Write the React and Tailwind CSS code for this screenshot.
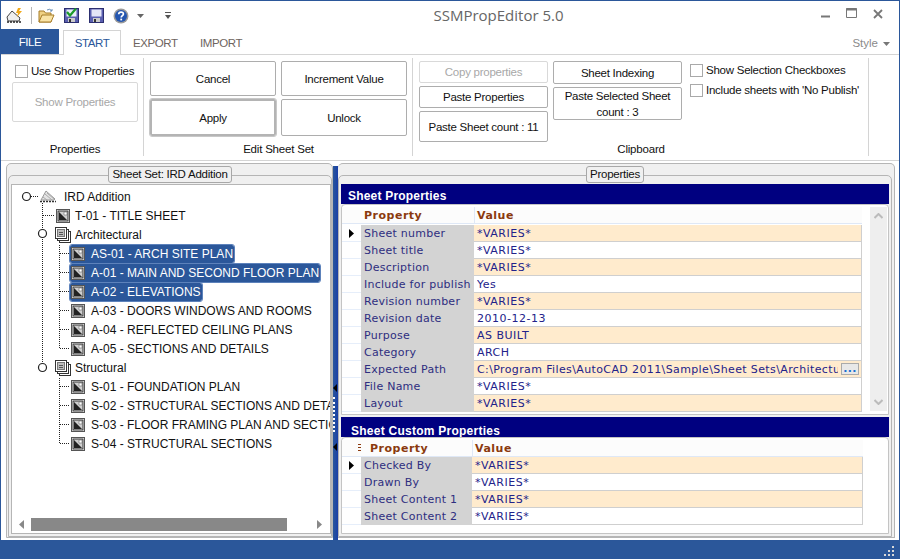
import React from 'react';

const sheetProps = [
  ['Sheet number', '*VARIES*'],
  ['Sheet title', '*VARIES*'],
  ['Description', '*VARIES*'],
  ['Include for publish', 'Yes'],
  ['Revision number', '*VARIES*'],
  ['Revision date', '2010-12-13'],
  ['Purpose', 'AS BUILT'],
  ['Category', 'ARCH'],
  ['Expected Path', 'C:\\Program Files\\AutoCAD 2011\\Sample\\Sheet Sets\\Architectural', true],
  ['File Name', '*VARIES*'],
  ['Layout', '*VARIES*'],
];

const customProps = [
  ['Checked By', '*VARIES*'],
  ['Drawn By', '*VARIES*'],
  ['Sheet Content 1', '*VARIES*'],
  ['Sheet Content 2', '*VARIES*'],
];

const tree = [
  { label: 'IRD Addition', kind: 'root' },
  { label: 'T-01 - TITLE SHEET', kind: 'top' },
  { label: 'Architectural', kind: 'group' },
  { label: 'AS-01 - ARCH SITE PLAN', kind: 'sheet', selected: true },
  { label: 'A-01 - MAIN AND SECOND FLOOR PLAN', kind: 'sheet', selected: true },
  { label: 'A-02 - ELEVATIONS', kind: 'sheet', selected: true },
  { label: 'A-03 - DOORS WINDOWS AND ROOMS', kind: 'sheet' },
  { label: 'A-04 - REFLECTED CEILING PLANS', kind: 'sheet' },
  { label: 'A-05 - SECTIONS AND DETAILS', kind: 'sheet' },
  { label: 'Structural', kind: 'group' },
  { label: 'S-01 - FOUNDATION PLAN', kind: 'sheet' },
  { label: 'S-02 - STRUCTURAL SECTIONS AND DETAILS', kind: 'sheet' },
  { label: 'S-03 - FLOOR FRAMING PLAN AND SECTIONS', kind: 'sheet' },
  { label: 'S-04 - STRUCTURAL SECTIONS', kind: 'sheet' },
];

function SheetIcon() {
  return (
    <svg width="14" height="14" viewBox="0 0 14 14" className="shrink-0">
      <rect x="0.5" y="0.5" width="13" height="13" fill="#fff" stroke="#555" />
      <rect x="2" y="2" width="10" height="10" fill="#cfcfcf" stroke="#333" />
      <path d="M3 3 L11 11 L3 11 Z" fill="#222" />
      <path d="M8 3h3v3h-3z" fill="#fff" stroke="#555" strokeWidth="0.5" />
    </svg>
  );
}

function GroupIcon() {
  return (
    <svg width="16" height="16" viewBox="0 0 16 16" className="shrink-0">
      <rect x="4.5" y="4.5" width="11" height="11" fill="#fff" stroke="#333" />
      <rect x="2.5" y="2.5" width="11" height="11" fill="#fff" stroke="#333" />
      <rect x="0.5" y="0.5" width="11" height="11" fill="#fff" stroke="#333" />
      <rect x="2.5" y="2.5" width="7" height="7" fill="#bdbdbd" stroke="#777" />
      <path d="M4 5h4v1H4zM4 7h4v1H4z" fill="#555" />
    </svg>
  );
}

function RootIcon() {
  return (
    <svg width="16" height="13" viewBox="0 0 16 13" className="shrink-0">
      <path d="M1 10 L6 1 L15 9 L14 10 Z" fill="#e4e4e4" stroke="#999" />
      <path d="M5 4 L12 10 M7 3 L14 9 M3 7 L7 10" stroke="#aaa" />
      <path d="M0 11.5h16" stroke="#333" strokeWidth="1.5" strokeDasharray="2 1" />
    </svg>
  );
}

// dotted tree lines, coordinates are relative to the white tree box
function TreeConnectors() {
  const dots = { stroke: '#222', strokeDasharray: '1 1', fill: 'none' };
  const children = [68, 87, 106, 125, 144, 163, 201, 220, 239, 258];
  return (
    <svg className="absolute left-0 top-0" width="70" height="300">
      <path d="M19 11.5 H27" {...dots} />
      <path d="M30.5 18 V178" {...dots} />
      <path d="M31 30.5 H42" {...dots} />
      <path d="M47.5 60 V163" {...dots} />
      <path d="M47.5 193 V258" {...dots} />
      {children.map((y) => (
        <path key={y} d={`M48 ${y + 0.5} H57`} {...dots} />
      ))}
      <circle cx="14.5" cy="11.5" r="4" fill="#fff" stroke="#222" strokeWidth="1.2" />
      <circle cx="30.5" cy="48.5" r="4" fill="#fff" stroke="#222" strokeWidth="1.2" />
      <circle cx="30.5" cy="182.5" r="4" fill="#fff" stroke="#222" strokeWidth="1.2" />
    </svg>
  );
}

function TreeRow({ label, kind, selected }) {
  if (kind === 'root') {
    return (
      <div className="flex h-[19px] items-center pl-[28px]">
        <RootIcon />
        <span className="ml-[8px]">{label}</span>
      </div>
    );
  }
  if (kind === 'top') {
    return (
      <div className="flex h-[19px] items-center pl-[44px]">
        <SheetIcon />
        <span className="ml-[5px]">{label}</span>
      </div>
    );
  }
  if (kind === 'group') {
    return (
      <div className="flex h-[19px] items-center pl-[43px]">
        <GroupIcon />
        <span className="ml-[4px]">{label}</span>
      </div>
    );
  }
  return (
    <div className="flex h-[19px] items-center pl-[58px]">
      <div className={selected ? 'flex h-[18px] shrink-0 items-center rounded-[2px] bg-[#2b579a] px-[1px] text-white outline outline-1 outline-[#5d82bb]' : 'flex h-[18px] shrink-0 items-center px-[1px]'}>
        <SheetIcon />
        <span className="ml-[6px] whitespace-nowrap">{label}</span>
      </div>
    </div>
  );
}

function RibbonButton({ children, className, disabled }) {
  return (
    <button className={`flex items-center justify-center rounded-[2px] border bg-white px-1 text-center text-[11.5px] leading-[16px] tracking-[-0.25px] ${disabled ? 'border-[#d9d9d9] text-[#a8a8a8]' : 'border-[#adadad] text-[#111]'} ${className}`}>
      {children}
    </button>
  );
}

function CheckRow({ children, className }) {
  return (
    <label className={`flex items-center whitespace-nowrap text-[11.5px] tracking-[-0.25px] text-[#111] ${className}`}>
      <span className="mr-[3px] h-[13px] w-[13px] shrink-0 border border-[#a9a9a9] bg-white" />
      {children}
    </label>
  );
}

function GroupLabel({ children }) {
  return <div className="mt-auto pr-[5px] text-center text-[11.5px] leading-[14px] tracking-[-0.2px] text-[#111]">{children}</div>;
}

function Legend({ children, className }) {
  return (
    <div className={`absolute top-[3px] rounded-[3px] border border-[#a8a8a8] bg-[#f0f0f0] text-center text-[11.5px] leading-[15px] tracking-[-0.25px] text-[#111] ${className}`}>
      {children}
    </div>
  );
}

function GridRow({ row, index, current, firstColClass, hasButton }) {
  const [name, value] = row;
  return (
    <div className="flex h-[17px]">
      <div className="flex h-[17px] w-[19px] shrink-0 items-center justify-center border-b border-[#e6eefa]">
        {current && (
          <svg width="5" height="9" viewBox="0 0 5 9"><path d="M0 0 L5 4.5 L0 9 Z" fill="#000" /></svg>
        )}
      </div>
      <div className={`flex h-[17px] shrink-0 items-center bg-[#d3d3d3] pl-[3px] pt-[2px] text-[#2e2e80] ${firstColClass}`}>{name}</div>
      <div className={`flex h-[17px] min-w-0 flex-1 items-center overflow-hidden border-b border-r border-[#cfcfcf] pl-[3px] text-[#22228a] ${hasButton ? 'tracking-[0.38px]' : 'tracking-[0.5px]'} ${index % 2 === 0 ? 'bg-[#ffebcd]' : 'bg-white'}`}>
        <span className="min-w-0 flex-1 overflow-hidden whitespace-nowrap pt-[2px]">{value}</span>
        {hasButton && (
          <span className="ml-[3px] mr-[2px] flex h-[12px] w-[18px] shrink-0 items-center justify-center border border-[#aaa] bg-[#e8e8e8] text-[11px] font-bold leading-[8px] text-[#1a6fd0]">...</span>
        )}
      </div>
    </div>
  );
}

export default function App() {
  const gridFont = "font-['DejaVu_Sans',sans-serif] text-[11px] tracking-[0.25px]";
  return (
    <div className="flex h-[559px] w-[900px] flex-col overflow-hidden border-x border-t border-[#2b579a] bg-white font-['Liberation_Sans',sans-serif]">
      {/* title bar */}
      <div className="flex h-[29px] shrink-0 items-center">
        <div className="flex w-[180px] shrink-0 items-center pl-[5px]">
          <svg width="17" height="16" viewBox="0 0 17 16">
            <path d="M1 9 L6 3 L14 10 L13 13 L2 13 Z" fill="#eee" stroke="#444" />
            <path d="M12 0 L15 0 L13 3 L16 3 L11 9 L12 5 L10 5 Z" fill="#f0a818" />
            <path d="M1 14h15" stroke="#222" strokeWidth="1.5" strokeDasharray="2 1" />
          </svg>
          <div className="ml-[8px] h-[17px] w-[1px] bg-[#b5b5b5]" />
          <svg className="ml-[6px]" width="17" height="15" viewBox="0 0 17 15">
            <path d="M1 3 H6 L7.5 5 H13 V14 H1 Z" fill="#f0d183" stroke="#a67c28" />
            <path d="M1 14 L4 7 H16 L13 14 Z" fill="#f9e3a5" stroke="#a67c28" />
            <path d="M9 2 Q12 0 14 3 M14 3 L14 1 M14 3 L12 3" stroke="#6a8fb5" fill="none" />
          </svg>
          <svg className="ml-[9px]" width="15" height="15" viewBox="0 0 15 15">
            <rect x="0.5" y="0.5" width="14" height="14" fill="#5a5fb0" stroke="#2c2f70" />
            <rect x="2.5" y="1.5" width="10" height="7" fill="#e9eef8" />
            <rect x="4" y="10" width="7" height="4" fill="#ccc" />
            <rect x="5" y="11" width="2" height="3" fill="#333" />
            <path d="M3 4 L6 7.5 L12 0.5" stroke="#1c9a2a" strokeWidth="2.2" fill="none" />
          </svg>
          <svg className="ml-[10px]" width="15" height="15" viewBox="0 0 15 15">
            <rect x="0.5" y="0.5" width="14" height="14" fill="#5a5fb0" stroke="#2c2f70" />
            <rect x="2.5" y="1.5" width="10" height="7" fill="#e4e6f6" />
            <rect x="4" y="10" width="7" height="4" fill="#ccc" />
            <rect x="5" y="11" width="2" height="3" fill="#333" />
          </svg>
          <svg className="ml-[9px]" width="16" height="16" viewBox="0 0 16 16">
            <circle cx="8" cy="8" r="7.5" fill="#9a9a9a" />
            <circle cx="8" cy="8" r="6" fill="#2456b0" />
            <path d="M5.7 6.2 C5.8 3.4 10.4 3.4 10.4 6 C10.4 7.7 8.2 7.7 8.2 9.6" stroke="#fff" strokeWidth="1.7" fill="none" />
            <rect x="7.3" y="10.6" width="1.8" height="1.8" fill="#fff" />
          </svg>
          <svg className="ml-[8px]" width="7" height="4" viewBox="0 0 7 4"><path d="M0 0 H7 L3.5 4 Z" fill="#666" /></svg>
          <svg className="ml-[21px]" width="6" height="7" viewBox="0 0 6 7"><path d="M0 0 H6 V1 H0 Z M0 3 H6 L3 7 Z" fill="#555" /></svg>
        </div>
        <div className="min-w-0 flex-1 pb-[1px] pr-[5px] text-center font-['Open_Sans',sans-serif] text-[15px] text-[#666]">SSMPropEditor 5.0</div>
        <div className="flex h-[29px] w-[78px] shrink-0 items-start">
          <svg width="10" height="10" viewBox="0 0 10 10" className="mt-[7px]"><path d="M0 8.5 H9" stroke="#777" strokeWidth="2" /></svg>
          <svg width="11" height="10" viewBox="0 0 11 10" className="ml-[15px] mt-[7px]"><path d="M0.5 0.5 H10.5 V9.5 H0.5 Z" stroke="#777" fill="none" /><path d="M0 1.5 H11" stroke="#777" strokeWidth="2" /></svg>
          <svg width="10" height="10" viewBox="0 0 10 10" className="ml-[16px] mt-[8px]"><path d="M1 1 L9 9 M9 1 L1 9" stroke="#777" strokeWidth="1.8" /></svg>
        </div>
      </div>

      {/* tabs */}
      <div className="flex h-[25px] shrink-0 items-end border-b border-[#d4d4d4] text-[11.5px] tracking-[-0.4px]">
        <div className="flex h-[25px] w-[58px] items-center justify-center bg-[#2b579a] pt-[3px] text-white">FILE</div>
        <div className="relative top-[1px] ml-[4px] flex h-[25px] w-[58px] items-center justify-center border-x border-t border-[#d4d4d4] bg-white pt-[2px] text-[#2b579a]">START</div>
        <div className="ml-[12px] flex h-[24px] w-[67px] items-center pt-[3px] text-[#6e6460]">EXPORT</div>
        <div className="flex h-[24px] items-center pt-[3px] text-[#6e6460]">IMPORT</div>
        <div className="ml-auto flex h-[24px] items-center pr-[9px] pt-[3px] tracking-normal text-[#8a8a8a]">
          Style
          <svg className="ml-[5px]" width="7" height="4" viewBox="0 0 7 4"><path d="M0 0 H7 L3.5 4 Z" fill="#777" /></svg>
        </div>
      </div>

      {/* ribbon */}
      <div className="flex h-[105px] shrink-0 pt-[3px]">
        <div className="flex h-[98px] w-[143px] shrink-0 flex-col border-r border-[#d4d4d4] pl-[11px]">
          <CheckRow className="ml-[3px] mt-[7px] h-[13px]">Use Show Properties</CheckRow>
          <RibbonButton disabled className="mt-[4px] h-[40px] w-[126px]">Show Properties</RibbonButton>
          <GroupLabel>Properties</GroupLabel>
        </div>
        <div className="flex h-[98px] w-[269px] shrink-0 flex-col border-r border-[#d4d4d4] pl-[6px] pt-[3px]">
          <div className="grid w-[257px] grid-cols-[126px_126px] gap-x-[5px] gap-y-[3px]">
            <RibbonButton className="h-[35px]">Cancel</RibbonButton>
            <RibbonButton className="h-[35px]">Increment Value</RibbonButton>
            <RibbonButton className="h-[37px] border-[2px] border-[#b4b4b4] outline outline-1 outline-[#c8c8c8]">Apply</RibbonButton>
            <RibbonButton className="h-[37px]">Unlock</RibbonButton>
          </div>
          <GroupLabel>Edit Sheet Set</GroupLabel>
        </div>
        <div className="flex h-[98px] w-[456px] shrink-0 flex-col border-r border-[#d4d4d4] pl-[6px] pt-[3px]">
          <div className="flex">
            <div className="flex w-[129px] shrink-0 flex-col gap-[3px]">
              <RibbonButton disabled className="h-[22px]">Copy properties</RibbonButton>
              <RibbonButton className="h-[22px]">Paste Properties</RibbonButton>
              <RibbonButton className="h-[31px]">Paste Sheet count : 11</RibbonButton>
            </div>
            <div className="ml-[5px] flex w-[129px] shrink-0 flex-col gap-[3px]">
              <RibbonButton className="h-[23px]">Sheet Indexing</RibbonButton>
              <RibbonButton className="h-[33px]">Paste Selected Sheet count : 3</RibbonButton>
            </div>
            <div className="ml-[8px] flex flex-col">
              <CheckRow className="mt-[3px] h-[13px]">Show Selection Checkboxes</CheckRow>
              <CheckRow className="mt-[7px] h-[13px]">Include sheets with 'No Publish'</CheckRow>
            </div>
          </div>
          <GroupLabel>Clipboard</GroupLabel>
        </div>
      </div>

      {/* main split */}
      <div className="relative flex min-h-0 flex-1 border-t border-[#d4d4d4] pt-[2px]">
        <div className="relative w-[332px] shrink-0 pl-[5px]">
          <div className="flex h-[375px] flex-col rounded-t-[5px] border border-[#b5b5b5] bg-[#f0f0f0] pl-[1px] pt-[11px]">
            <div className="flex min-h-0 flex-1 flex-col rounded-t-[5px] border border-[#b5b5b5] bg-[#f0f0f0] pb-[2px] pl-[2px] pt-[8px]">
              <div className="relative min-h-0 flex-1 overflow-hidden border border-[#b5b5b5] bg-white pt-[2px] text-[12px] text-[#111]">
                <TreeConnectors />
                <div className="relative">
                  {tree.map((n) => <TreeRow key={n.label} {...n} />)}
                </div>
                <div className="absolute bottom-[2px] left-0 right-0 flex h-[13px] items-center pl-[7px]">
                  <svg width="5" height="9" viewBox="0 0 5 9"><path d="M5 0 L0 4.5 L5 9 Z" fill="#888" /></svg>
                  <div className="ml-[7px] h-[13px] w-[256px] bg-[#888]" />
                  <svg className="ml-[30px]" width="5" height="9" viewBox="0 0 5 9"><path d="M0 0 L5 4.5 L0 9 Z" fill="#888" /></svg>
                </div>
              </div>
            </div>
          </div>
          <Legend className="left-[107px] w-[124px]">Sheet Set: IRD Addition</Legend>
        </div>

        <div className="relative mt-[3px] h-[374px] w-[5px] shrink-0 bg-gradient-to-r from-[#2b579a] to-[#1a3ea8]">
          <div className="absolute left-[0px] top-[231px] h-[35px] w-[2px] border-l-2 border-dotted border-white" />
          <svg className="absolute left-[0px] top-[218px]" width="4" height="8" viewBox="0 0 4 8"><path d="M4 0 L0 4 L4 8 Z" fill="#000" /></svg>
          <svg className="absolute left-[0px] top-[277px]" width="4" height="8" viewBox="0 0 4 8"><path d="M4 0 L0 4 L4 8 Z" fill="#000" /></svg>
        </div>

        <div className="relative min-w-0 flex-1 pr-[4px]">
          <div className="flex h-[375px] flex-col rounded-t-[5px] border-y border-r border-[#b5b5b5] bg-[#f0f0f0] pr-[2px] pt-[11px]">
            <div className={`flex min-h-0 flex-1 flex-col rounded-t-[5px] border border-[#b5b5b5] bg-[#f0f0f0] px-[2px] pb-[2px] pt-[8px] ${gridFont}`}>
              <div className="flex h-[20px] shrink-0 items-center bg-[#000080] pl-[7px] pt-[3px] font-['Liberation_Sans',sans-serif] text-[12px] font-bold tracking-[0.2px] text-white">Sheet Properties</div>
              <div className="flex h-[211px] shrink-0 rounded-t-[4px] border border-[#c4c4c4] bg-white">
                <div className="w-[520px] min-w-0 shrink-0 pt-[2px]">
                  <div className="flex h-[17px] border-b border-[#dfe8f6] bg-[#fcfcfc] font-bold tracking-[0.5px] text-[#8b3a0e]">
                    <div className="w-[19px] shrink-0" />
                    <div className="w-[113px] shrink-0 pl-[3px] leading-[18px]">Property</div>
                    <div className="flex-1 border-l border-[#dfe8f6] pl-[2px] leading-[18px]">Value</div>
                  </div>
                  <div className="pt-[1px]">
                    {sheetProps.map((r, i) => (
                      <GridRow key={r[0]} row={r} index={i} current={i === 0} firstColClass="w-[113px]" hasButton={r[2]} />
                    ))}
                  </div>
                </div>
                <div className="mb-[3px] ml-[8px] mt-[2px] flex w-[17px] shrink-0 flex-col items-center justify-between bg-[#eeeeee] py-[6px]">
                  <svg width="9" height="6" viewBox="0 0 9 6"><path d="M0.5 5 L4.5 1 L8.5 5" stroke="#bbb" strokeWidth="2" fill="none" /></svg>
                  <svg width="9" height="6" viewBox="0 0 9 6"><path d="M0.5 1 L4.5 5 L8.5 1" stroke="#bbb" strokeWidth="2" fill="none" /></svg>
                </div>
              </div>
              <div className="mt-[2px] flex h-[20px] shrink-0 items-end bg-[#000080] pl-[10px] font-['Liberation_Sans',sans-serif] text-[12px] font-bold leading-[12px] text-white">Sheet Custom Properties</div>
              <div className="min-h-0 flex-1 rounded-t-[4px] border border-[#c4c4c4] bg-white pt-[2px]">
                <div className="w-[521px]">
                  <div className="flex h-[17px] border-b border-[#dfe8f6] bg-[#fcfcfc] font-bold tracking-[0.5px] text-[#8b3a0e]">
                    <div className="flex w-[19px] shrink-0 items-center justify-end">
                      <svg width="3" height="8" viewBox="0 0 3 8"><path d="M0 0h3v1H0zM0 3h3v1H0zM0 6h3v1H0z" fill="#8b3a0e" /></svg>
                    </div>
                    <div className="w-[111px] shrink-0 pl-[9px] leading-[18px]">Property</div>
                    <div className="flex-1 border-l border-[#dfe8f6] pl-[2px] leading-[18px]">Value</div>
                  </div>
                  <div>
                    {customProps.map((r, i) => (
                      <GridRow key={r[0]} row={r} index={i} current={i === 0} firstColClass="w-[111px]" />
                    ))}
                  </div>
                </div>
              </div>
            </div>
          </div>
          <Legend className="left-[248px] w-[58px]">Properties</Legend>
        </div>
      </div>

      {/* status bar */}
      <div className="flex h-[19px] shrink-0 items-end justify-end bg-[#2b579a] pb-[1px] pr-[3px]">
        <svg width="12" height="12" viewBox="0 0 12 12">
          <path d="M8 0h2v2H8zM4 4h2v2H4zM8 4h2v2H8zM0 8h2v2H0zM4 8h2v2H4zM8 8h2v2H8z" fill="#d8d8d8" />
        </svg>
      </div>
    </div>
  );
}
